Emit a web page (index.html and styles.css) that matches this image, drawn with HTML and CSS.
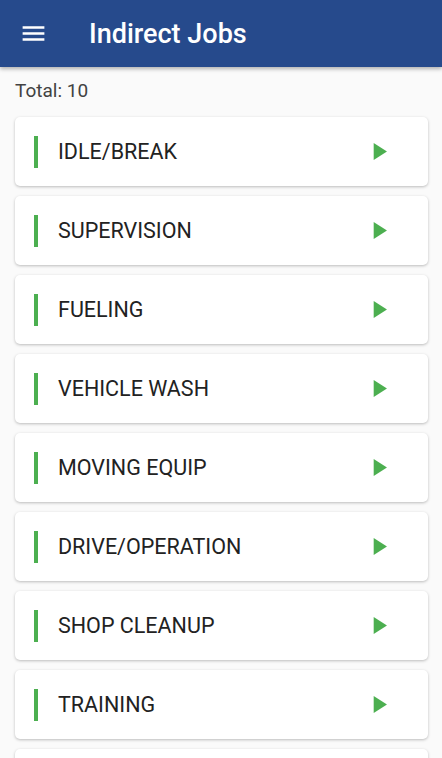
FILE: index.html
```html
<!DOCTYPE html>
<html lang="en">

<head>
    <meta charset="UTF-8">
    <meta name="viewport" content="width=device-width, initial-scale=1.0">
    <title>Indirect Jobs</title>
    <link rel="stylesheet" href="styles.css">
</head>

<body>
    <header class="toolbar">
        <button class="menu-btn" aria-label="Menu">
            <svg viewBox="0 0 24 24" width="29" height="29">
                <path d="M3 18h18v-2H3v2zm0-5h18v-2H3v2zm0-7v2h18V6H3z" fill="#fff" />
            </svg>
        </button>
        <h1 class="title">Indirect Jobs</h1>
    </header>

    <main class="content">
        <p class="total">Total: 10</p>

        <ul class="job-list">
            <li class="job-card">
                <span class="job-bar"></span>
                <span class="job-name">IDLE/BREAK</span>
                <svg class="job-play" viewBox="0 0 24 24"><path d="M8 5v14l11-7z" /></svg>
            </li>
            <li class="job-card">
                <span class="job-bar"></span>
                <span class="job-name">SUPERVISION</span>
                <svg class="job-play" viewBox="0 0 24 24"><path d="M8 5v14l11-7z" /></svg>
            </li>
            <li class="job-card">
                <span class="job-bar"></span>
                <span class="job-name">FUELING</span>
                <svg class="job-play" viewBox="0 0 24 24"><path d="M8 5v14l11-7z" /></svg>
            </li>
            <li class="job-card">
                <span class="job-bar"></span>
                <span class="job-name">VEHICLE WASH</span>
                <svg class="job-play" viewBox="0 0 24 24"><path d="M8 5v14l11-7z" /></svg>
            </li>
            <li class="job-card">
                <span class="job-bar"></span>
                <span class="job-name">MOVING EQUIP</span>
                <svg class="job-play" viewBox="0 0 24 24"><path d="M8 5v14l11-7z" /></svg>
            </li>
            <li class="job-card">
                <span class="job-bar"></span>
                <span class="job-name">DRIVE/OPERATION</span>
                <svg class="job-play" viewBox="0 0 24 24"><path d="M8 5v14l11-7z" /></svg>
            </li>
            <li class="job-card">
                <span class="job-bar"></span>
                <span class="job-name">SHOP CLEANUP</span>
                <svg class="job-play" viewBox="0 0 24 24"><path d="M8 5v14l11-7z" /></svg>
            </li>
            <li class="job-card">
                <span class="job-bar"></span>
                <span class="job-name">TRAINING</span>
                <svg class="job-play" viewBox="0 0 24 24"><path d="M8 5v14l11-7z" /></svg>
            </li>
            <li class="job-card job-card-empty"></li>
        </ul>
    </main>
</body>

</html>
```

FILE: styles.css
```css
body {
    margin: 0;
    padding: 0;
    background-color: #fafafa;
    font-family: Roboto, "Noto Sans", Arial, sans-serif;
    height: 100vh;
    overflow: hidden;
}

.toolbar {
    position: relative;
    z-index: 2;
    height: 67px;
    background-color: #264a8c;
    display: flex;
    align-items: center;
    box-shadow: 0 2px 4px rgba(0, 0, 0, 0.3);
}

.menu-btn {
    background: none;
    border: 0;
    padding: 0;
    margin-left: 19px;
    width: 29px;
    height: 29px;
    display: flex;
}

.title {
    margin: 0 0 0 41px;
    color: #fff;
    font-size: 27px;
    font-weight: 500;
}

.content {
    padding: 0 14px 0 15px;
}

.total {
    margin: 0;
    padding-top: 12px;
    height: 38px;
    color: #424242;
    font-size: 19px;
}

.job-list {
    list-style: none;
    margin: 0;
    padding: 0;
    display: flex;
    flex-direction: column;
    gap: 10px;
}

.job-card {
    height: 69px;
    background-color: #fff;
    border-radius: 5px;
    box-shadow: 0 1px 3px rgba(0, 0, 0, 0.25);
    display: flex;
    align-items: center;
    padding-left: 19px;
}

.job-bar {
    width: 4px;
    height: 32px;
    background-color: #4caf50;
}

.job-name {
    flex: 1;
    margin-left: 20px;
    color: #222;
    font-size: 21.5px;
}

.job-play {
    width: 29px;
    height: 29px;
    margin-right: 35px;
    fill: #4caf50;
}
```
